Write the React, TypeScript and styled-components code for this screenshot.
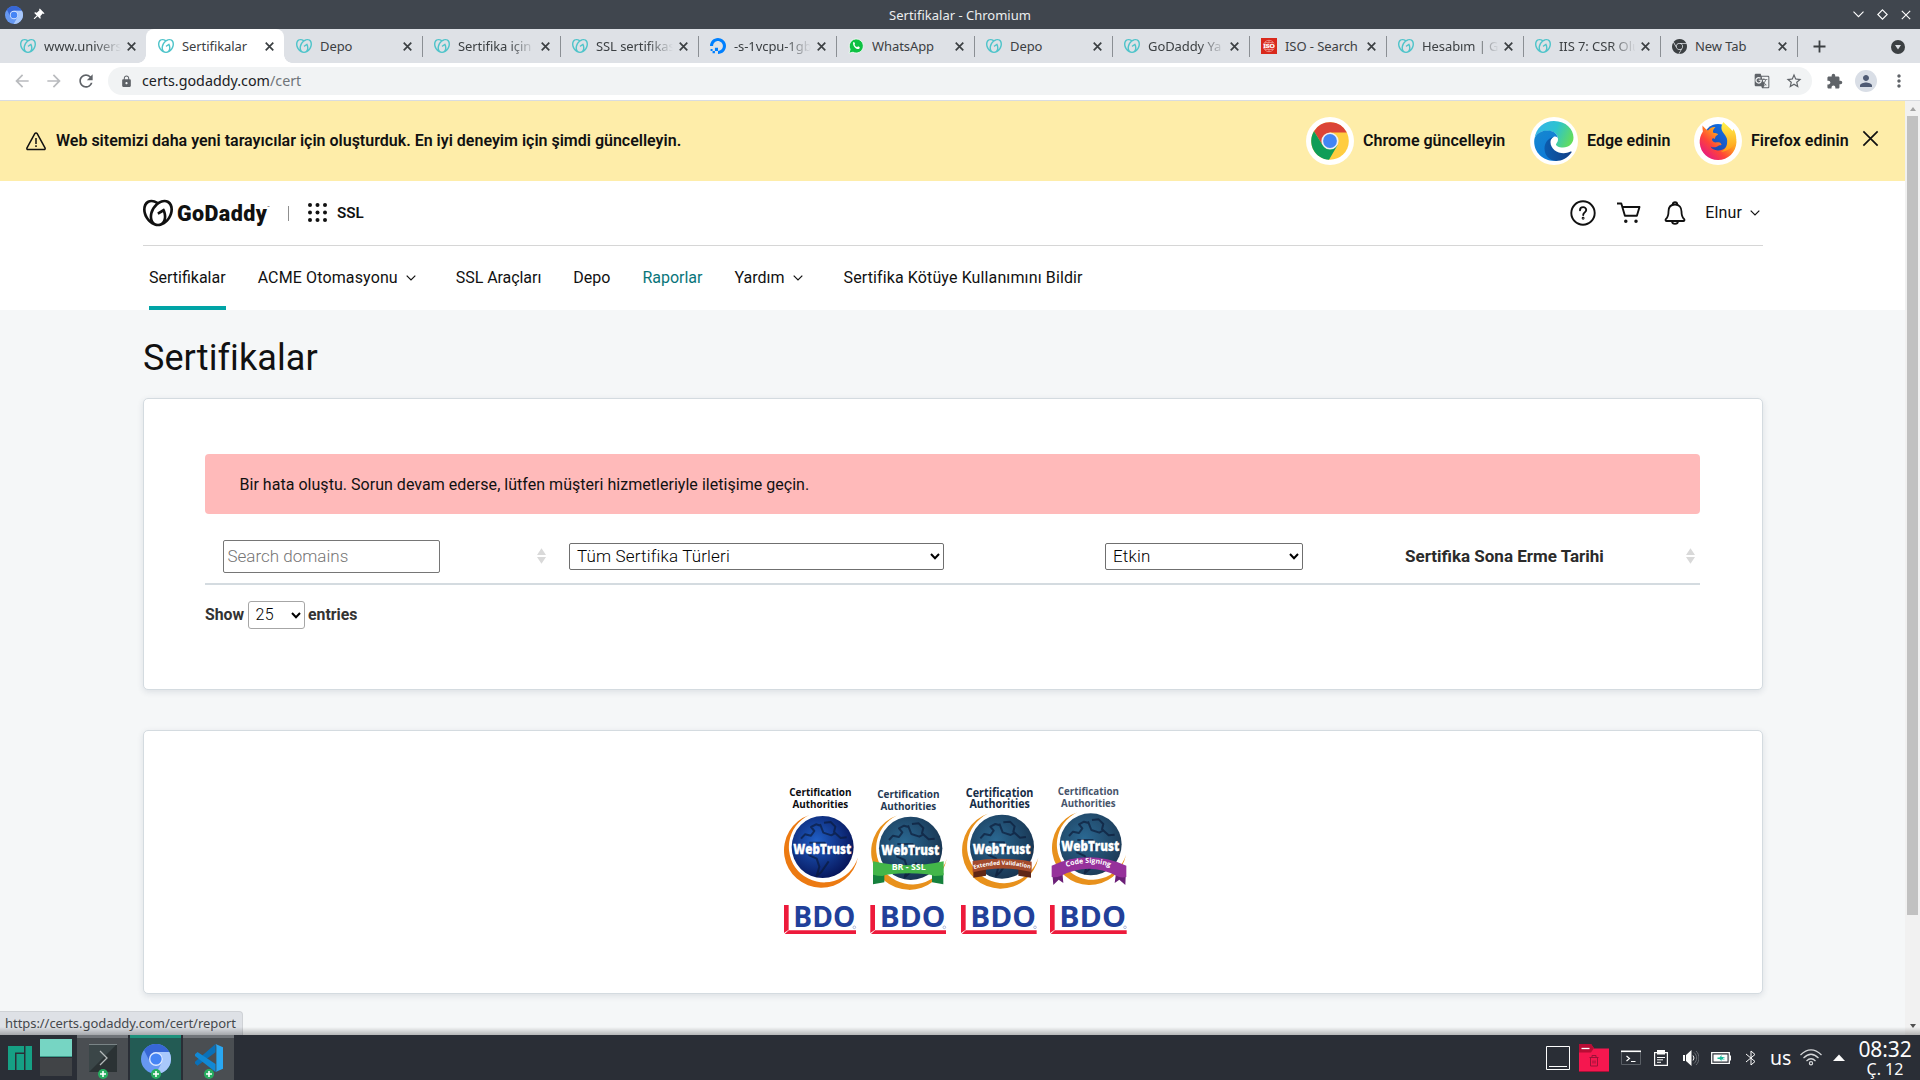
import React from 'react';
import styled, { createGlobalStyle } from 'styled-components';
import { SiGodaddy, SiDigitalocean, SiGooglechrome } from 'react-icons/si';
import { MdArrowBack, MdArrowForward, MdRefresh, MdLock, MdGTranslate, MdStarBorder, MdExtension, MdPerson, MdMoreVert, MdPushPin } from 'react-icons/md';

const ui = '"Noto Sans", sans-serif';
const body = 'Roboto, "Liberation Sans", sans-serif';

const Global = createGlobalStyle`
  *, *::before, *::after { box-sizing: border-box; }
  html, body { margin: 0; height: 100%; overflow: hidden; }
  svg { display: block; flex: none; }
`;

const Desktop = styled.div`
  width: 1920px;
  height: 1080px;
  display: flex;
  flex-direction: column;
  overflow: hidden;
  font-family: ${ui};
  white-space: nowrap;
`;

/* Window chrome */
const TitleBar = styled.header`
  height: 29px;
  flex: none;
  display: grid;
  grid-template-columns: 1fr auto 1fr;
  align-items: center;
  padding: 0 5px;
  background: #40464e;
  color: #eceeef;
  font-size: 13px;
  line-height: 18px;
`;
const TitleSide = styled.div<{ $end?: boolean; $gap: number }>`
  display: flex;
  align-items: center;
  justify-content: ${(p) => (p.$end ? 'flex-end' : 'flex-start')};
  gap: ${(p) => p.$gap}px;
  padding-right: ${(p) => (p.$end ? 4 : 0)}px;
`;
const Pin = styled(MdPushPin)`
  transform: rotate(45deg);
`;

const TabStrip = styled.nav`
  height: 34px;
  flex: none;
  display: flex;
  align-items: center;
  padding-left: 8px;
  background: #dee1e6;
`;
const TabItem = styled.div<{ $active?: boolean; $w: number; $line?: boolean }>`
  position: relative;
  width: ${(p) => p.$w}px;
  height: 34px;
  flex: none;
  display: flex;
  align-items: center;
  padding: 0 10.5px 0 12px;
  border-radius: 8px 8px 0 0;
  background: ${(p) => (p.$active ? '#fff' : 'transparent')};
  &::before {
    content: '';
    display: ${(p) => (p.$line ? 'block' : 'none')};
    position: absolute;
    left: 0;
    top: 7px;
    width: 1px;
    height: 21px;
    background: #8b8f94;
  }
`;
const TabFoot = styled.i<{ $side: 'left' | 'right' }>`
  position: absolute;
  bottom: 0;
  ${(p) => p.$side}: -8px;
  width: 8px;
  height: 8px;
  background: radial-gradient(circle at ${(p) => (p.$side === 'left' ? '0 0' : '100% 0')}, transparent 7.5px, #fff 8px);
`;
const TabLabel = styled.span`
  flex: 1;
  margin: 0 6px 0 8px;
  overflow: hidden;
  font-size: 13px;
  letter-spacing: -0.08px;
  line-height: 20px;
  color: #3c4043;
  mask-image: linear-gradient(90deg, #000 51px, transparent 77px);
`;
const TabFull = styled(TabLabel)`
  mask-image: none;
`;
const StripEnd = styled.div`
  flex: 1;
  height: 21px;
  margin-bottom: -1px;
  display: flex;
  align-items: center;
  justify-content: space-between;
  padding: 0 15px 0 15px;
  border-left: 1px solid #8b8f94;
`;

const Toolbar = styled.div`
  height: 38px;
  flex: none;
  display: flex;
  align-items: center;
  padding: 0 12px 1px;
  border-bottom: 1px solid #d9dce1;
  color: #5f6368;
`;
const NavButtons = styled.div`
  width: 96px;
  flex: none;
  display: flex;
  gap: 12px;
`;
const Omnibox = styled.div`
  width: 1704px;
  height: 28px;
  flex: none;
  display: flex;
  align-items: center;
  padding: 0 9px 0 12px;
  border-radius: 14px;
  background: #f1f3f4;
`;
const Url = styled.div`
  flex: 1;
  margin: -1px 0 0 9px;
  font-size: 14.3px;
  line-height: 20px;
  color: #202124;
  span { color: #70757a; }
`;
const OmniActions = styled.div`
  display: flex;
  align-items: center;
  gap: 15px;
`;
const ToolActions = styled.div`
  display: flex;
  align-items: center;
  margin-left: 14px;
`;
const Avatar = styled.div`
  width: 22px;
  height: 22px;
  margin: 0 12px 0 12px;
  display: flex;
  align-items: center;
  justify-content: center;
  border-radius: 50%;
  background: #d9dee6;
  color: #4f5b74;
`;

/* Page viewport */
const Viewport = styled.div`
  position: relative;
  height: 934px;
  flex: none;
  display: flex;
  background: #f5f7f8;
  font-family: ${body};
  color: #111;
`;
const Page = styled.main`
  width: 1905px;
  height: 934px;
  overflow: hidden;
`;
const ScrollTrack = styled.div`
  width: 15px;
  display: flex;
  flex-direction: column;
  align-items: center;
  background: #f1f1f1;
`;
const ScrollArrow = styled.div<{ $down?: boolean }>`
  width: 0;
  height: 0;
  margin-top: ${(p) => (p.$down ? 109 : 6)}px;
  border: solid transparent;
  border-width: ${(p) => (p.$down ? '4px 3.5px 0' : '0 3.5px 4px')};
  border-${(p) => (p.$down ? 'top' : 'bottom')}-color: ${(p) => (p.$down ? '#505050' : '#a3a3a3')};
`;
const ScrollThumb = styled.div`
  width: 11px;
  height: 799px;
  margin-top: 5px;
  background: #c1c1c1;
`;

const Banner = styled.section`
  height: 80px;
  display: flex;
  align-items: center;
  padding: 0 26px 0 26px;
  background: #feeda9;
  font-size: 16px;
  font-weight: 600;
  line-height: 24px;
`;
const BannerText = styled.p`
  flex: 1;
  margin: 0 0 0 10px;
`;
const BrowserLink = styled.div<{ $w: number }>`
  width: ${(p) => p.$w}px;
  display: flex;
  align-items: center;
  gap: 9px;
  span { margin-top: -1px; }
`;
const Disc = styled.div`
  width: 48px;
  height: 48px;
  flex: none;
  display: flex;
  align-items: center;
  justify-content: center;
  border-radius: 50%;
  background: #fff;
`;
const CloseBox = styled.div`
  margin-top: -6px;
`;

const SiteHeader = styled.header`
  height: 129px;
  padding: 0 142px 0 143px;
  background: #fff;
`;
const HeaderTop = styled.div`
  height: 65px;
  display: flex;
  align-items: center;
  border-bottom: 1px solid #d6d6d6;
`;
const Wordmark = styled.span`
  width: 94px;
  margin: 2px 0 0 4px;
  display: flex;
  font-size: 21.5px;
  font-weight: 900;
  letter-spacing: 0.4px;
  line-height: 26px;
  sup {
    font-size: 4px;
    font-weight: 400;
    line-height: 14px;
    letter-spacing: 0;
  }
`;
const Rule = styled.i`
  width: 1px;
  height: 15px;
  margin: 0 19px 0 17px;
  background: #8f8f8f;
`;
const Dots = styled.svg`
  margin-bottom: 2px;
`;
const Product = styled.span`
  flex: 1;
  margin-left: 10px;
  font-size: 15.2px;
  font-weight: 600;
  line-height: 24px;
`;
const HeaderTools = styled.div`
  display: flex;
  align-items: center;
  gap: 20px;
  padding-right: 3px;
`;
const User = styled.span`
  display: flex;
  align-items: center;
  gap: 8px;
  margin-left: -1px;
  font-size: 16px;
  letter-spacing: 0.15px;
  line-height: 24px;
`;
const SiteNav = styled.nav`
  height: 64px;
  display: flex;
  padding-left: 6px;
`;
const NavItem = styled.a<{ $active?: boolean; $hover?: boolean; $after: number; $track?: number }>`
  height: 64px;
  margin-right: ${(p) => p.$after}px;
  display: flex;
  align-items: center;
  gap: 8px;
  padding-top: 4px;
  border-bottom: 4px solid ${(p) => (p.$active ? '#00a4a6' : 'transparent')};
  font-size: 16px;
  letter-spacing: ${(p) => p.$track ?? 0}px;
  line-height: 24px;
  color: ${(p) => (p.$hover ? '#09757a' : '#111')};
`;

const Content = styled.div`
  padding: 0 142px 0 143px;
`;
const Heading = styled.h1`
  height: 88px;
  margin: 0;
  padding-top: 25px;
  font-size: 36px;
  font-weight: 400;
  letter-spacing: 0.08px;
  line-height: 46px;
`;
const Card = styled.section<{ $h: number }>`
  height: ${(p) => p.$h}px;
  margin-bottom: 40px;
  border: 1px solid #d4dbe0;
  border-radius: 5px;
  background: #fff;
  box-shadow: 0 2px 6px rgba(40, 60, 80, 0.12);
`;
const CertCard = styled(Card)`
  padding: 55px 62px 0 61px;
`;
const SealCard = styled(Card)`
  padding: 43px 0 0 636px;
  display: flex;
`;
const Alert = styled.div`
  height: 60px;
  display: flex;
  align-items: center;
  padding: 1px 0 0 34.5px;
  border-radius: 4px;
  background: #ffbaba;
  font-size: 16px;
  letter-spacing: 0.03px;
  line-height: 24px;
`;
const TableHead = styled.div`
  height: 71px;
  display: grid;
  grid-template-columns: 346px 540px 301px 1fr;
  align-items: center;
  border-bottom: 2px solid #d4dbe0;
`;
const Column = styled.div<{ $l: number }>`
  height: 71px;
  display: flex;
  align-items: center;
  justify-content: space-between;
  padding: 13px 5px 0 ${(p) => p.$l}px;
  font-size: 17px;
  font-weight: 700;
  line-height: 24px;
  color: #2b2b2b;
`;
const SearchField = styled.div`
  width: 217px;
  height: 33px;
  padding-left: 3.5px;
  border: 1px solid #767676;
  border-radius: 2px;
  font-size: 17px;
  font-weight: 300;
  line-height: 30px;
  color: #757575;
`;
const Picker = styled.div<{ $w: number; $h: number; $soft?: boolean; $size?: number }>`
  width: ${(p) => p.$w}px;
  height: ${(p) => p.$h}px;
  display: flex;
  align-items: center;
  justify-content: space-between;
  padding: 0 3px 0 7px;
  border: 1px solid ${(p) => (p.$soft ? '#a6a6a6' : '#6f6f6f')};
  border-radius: ${(p) => (p.$soft ? 3 : 2)}px;
  background: #fff;
  font-size: ${(p) => p.$size ?? 17}px;
  font-weight: 300;
  letter-spacing: 0.16px;
  line-height: 24px;
  color: #000;
`;
const LengthRow = styled.div`
  display: flex;
  align-items: center;
  gap: 3.5px;
  margin-top: 16px;
  font-size: 15.8px;
  font-weight: 700;
  line-height: 24px;
  color: #333;
`;

const StatusBubble = styled.div`
  position: absolute;
  left: 0;
  bottom: 0;
  width: 243px;
  height: 24px;
  padding-left: 5px;
  border: 1px solid #cfd2d6;
  border-width: 1px 1px 0 0;
  border-radius: 0 4px 0 0;
  background: #dee1e6;
  font: 13px/23px ${ui};
  letter-spacing: -0.05px;
  color: #45484c;
`;
const PanelShadow = styled.div`
  position: absolute;
  left: 0;
  bottom: 0;
  width: 100%;
  height: 8px;
  background: linear-gradient(rgba(0, 0, 0, 0), rgba(0, 0, 0, 0.26));
`;

/* Panel */
const Panel = styled.footer`
  height: 45px;
  flex: none;
  display: flex;
  justify-content: space-between;
  background: #2a2e36;
  color: #fcfcfc;
`;
const PanelLeft = styled.div`
  display: flex;
  padding-left: 8px;
`;
const Pager = styled.div`
  width: 32px;
  height: 37px;
  margin: 4px 5px 0 8px;
  display: grid;
  grid-template-rows: 18px 18px;
  gap: 1px;
  i:first-child { background: #76d5c3; border-bottom: 1px solid #3d9c8b; }
  i:last-child { background: #414447; }
`;
const Task = styled.div<{ $active?: boolean }>`
  position: relative;
  width: 51px;
  height: 45px;
  margin-right: 2px;
  display: flex;
  justify-content: center;
  padding-top: 6px;
  border-top: 3px solid ${(p) => (p.$active ? '#1e917c' : '#71757a')};
  background: ${(p) => (p.$active ? '#235b54' : '#4a4e52')};
`;
const PlusBadge = styled.div`
  position: absolute;
  left: 21px;
  bottom: 1px;
`;
const Tray = styled.div`
  display: flex;
  align-items: center;
  padding-right: 8px;
`;
const TrayIcon = styled.div<{ $w: number; $after: number }>`
  width: ${(p) => p.$w}px;
  margin-right: ${(p) => p.$after}px;
`;
const Layout = styled.span`
  width: 21px;
  margin: 1px 9px 0 -1px;
  font-size: 19.5px;
  line-height: 24px;
`;
const Clock = styled.div`
  width: 54px;
  display: flex;
  flex-direction: column;
  align-items: center;
  font-size: 16px;
  line-height: 17px;
  b {
    font-size: 21px;
    font-weight: 400;
    letter-spacing: -0.1px;
    line-height: 24px;
  }
`;

/* Small drawings */
const Cross = ({ size = 9, w = 1.7, color = '#3c4043' }: { size?: number; w?: number; color?: string }) => (
  <svg width={size} height={size} viewBox="0 0 10 10" stroke={color} strokeWidth={(w * 10) / size} fill="none"><path d="M.8.8l8.4 8.4M9.2.8L.8 9.2" /></svg>
);
const Chevron = () => (
  <svg width="10" height="6" viewBox="0 0 10 6" fill="none" stroke="#111" strokeWidth="1.2"><path d="M.7.7L5 5 9.3.7" /></svg>
);
const Caret = () => (
  <svg width="10" height="7" viewBox="0 0 10 7" fill="none" stroke="#000" strokeWidth="2"><path d="M1 1l4 4.2L9 1" /></svg>
);
const Sort = () => (
  <svg width="9" height="16" viewBox="0 0 9 16" fill="#d9d9d9"><path d="M0 7h9L4.500.3zM0 9h9l-4.500 6.700z" /></svg>
);
const Chromium = ({ size }: { size: number }) => (
  <svg width={size} height={size} viewBox="0 0 30 30">
    <circle cx="15" cy="15" r="15" fill="#6698f2" />
    <path d="M15 8h13.300A15 15 0 0 0 3 6l6 12a7 7 0 0 1 6-10z" fill="#3767d6" />
    <path d="M28.300 8H15a7 7 0 0 1 6 10.500L14.500 30A15 15 0 0 0 28.300 8z" fill="#a9c8fb" />
    <circle cx="15" cy="15" r="7" fill="#dbe7ff" /><circle cx="15" cy="15" r="5.600" fill="#4584f5" />
  </svg>
);
const IsoMark = () => (
  <svg width="16" height="16" viewBox="0 0 16 16">
    <rect width="16" height="16" fill="#d9291c" />
    <g fill="none" stroke="#f0a39c" strokeWidth=".7"><circle cx="8" cy="8" r="5.700" /><path d="M8 2v12M4 4.500h8M4 11.500h8" /></g>
    <rect x="1" y="5.500" width="14" height="5" fill="#d9291c" />
    <text x="8" y="10.300" textAnchor="middle" fontFamily="Liberation Serif" fontWeight="700" fontSize="6.800" fill="#fff" stroke="#fff" strokeWidth=".3">ISO</text>
  </svg>
);
const WhatsMark = () => (
  <svg width="16" height="16" viewBox="0 0 16 16">
    <path d="M1 15.200l1.100-3.900A7 7 0 1 1 5 14.200z" fill="#0ec143" stroke="#fff" strokeWidth=".8" />
    <path d="M5.300 4.300c.5-.5 1-.3 1.200.2l.5 1.200c.1.400-.5.900-.5 1.100.5 1 1.400 1.900 2.500 2.300.4 0 .8-.9 1.100-.8l1.400.7c.5.300.1 1.500-.5 1.900-2.600 1.200-7-3.300-5.700-6.600z" fill="#fff" />
  </svg>
);
const WarnIcon = () => (
  <svg width="20" height="19" viewBox="0 0 20 19" fill="none" stroke="#111" strokeWidth="1.500" strokeLinejoin="round">
    <path d="M8.800 1.700L1 15.900c-.4.900 0 1.700 1 1.700h16c1 0 1.400-.8 1-1.700L11.200 1.700c-.6-1-1.800-1-2.400 0z" /><path d="M10 6v6M10 13.300v1.700" />
  </svg>
);
const ChromeLogo = () => (
  <svg width="38" height="38" viewBox="0 0 38 38">
    <circle cx="19" cy="19" r="18.800" fill="#ffcd40" />
    <path d="M19 10.500h16.800A18.800 18.800 0 0 0 3 9.200l8.700 14z" fill="#db4437" />
    <path d="M3 9.200A18.800 18.800 0 0 0 18 37.800l8.500-14.500-14.800-.1z" fill="#0f9d58" />
    <circle cx="19" cy="19" r="8.600" fill="#f1f1f1" /><circle cx="19" cy="19" r="6.900" fill="#4285f4" />
  </svg>
);
const EdgeLogo = () => (
  <svg width="40" height="40" viewBox="0 0 40 40">
    <defs>
      <linearGradient id="ea" x1="0" x2="1" y1=".3" y2=".6"><stop offset="0" stopColor="#35b4e9" /><stop offset=".5" stopColor="#2cc3d0" /><stop offset="1" stopColor="#64dd5b" /></linearGradient>
      <linearGradient id="eb" x1="0" x2=".6" y1="0" y2="1"><stop offset="0" stopColor="#1688cf" /><stop offset="1" stopColor="#0d79d8" /></linearGradient>
      <linearGradient id="ec" x1="0" x2="1"><stop offset="0" stopColor="#0b5cae" /><stop offset="1" stopColor="#123f86" /></linearGradient>
    </defs>
    <path d="M.5 17.500C2 7 10 0 20 0c12 0 19.500 8.500 19.500 16.500 0 6-4.500 10-10.500 10-4.500 0-7-1.500-7-3 0-1.200 2-2 2-5.500C24 13 19 9.800 13.500 9.800 7 9.800 2 13 .5 17.500z" fill="url(#ea)" />
    <path d="M.4 18C2 12.500 7.500 9.600 13.500 9.600 20 9.600 24 14 24 18c0-2-2.500-3-4.500-2-3 1.500-5.500 6-5.500 10.500 0 6 4 11.500 10 13C10 42 -1.500 31 .4 18z" fill="url(#eb)" />
    <path d="M19.500 16c-5.500 1-9 6-9 11.500C10.500 34 15 39.500 22 40c6 0 12-3.500 15.500-8.500.5-.8-.3-1.300-1-.9C28 35 16.500 30 16.500 21c0-2 1-4 3-5z" fill="url(#ec)" />
  </svg>
);
const FirefoxLogo = () => (
  <svg width="38" height="38" viewBox="0 0 38 38">
    <defs>
      <linearGradient id="fa" x1=".9" x2=".1" y1=".1" y2=".9"><stop offset="0" stopColor="#ffd53a" /><stop offset=".35" stopColor="#ff9a1f" /><stop offset=".65" stopColor="#ff4438" /><stop offset="1" stopColor="#e3168b" /></linearGradient>
      <linearGradient id="fb" x1="0" x2="1" y1="1" y2="0"><stop offset="0" stopColor="#243a9c" /><stop offset="1" stopColor="#0a7cf5" /></linearGradient>
      <linearGradient id="fc" x1="0" x2="0" y1="0" y2="1"><stop offset="0" stopColor="#fff44f" /><stop offset="1" stopColor="#ff9a16" /></linearGradient>
    </defs>
    <circle cx="19" cy="16" r="14" fill="url(#fb)" />
    <path d="M3.500 3.500c-.2 2 .1 4 .4 6C1.500 13 .5 17 .7 21 1.500 31 9.500 38 19 38c10 0 18-7.500 18.500-18C37 13 34 9 31 7c-2 4-1 9-2.500 12 1 6-3.500 9.500-9.500 9.500-4-.3-6-1.500-7.500-4 3 1.500 6 .8 7.500-.6 2-1.300 3.500-.5 3.500-1.500-1-2.500-4-2-6-2-2.500-.2-3.500-2-3.500-3.500 1-1 2-.5 3 0 .3-1.500 0-2.500 3-4.300 0-1.800-3.500-1.500-5-2.200C13.500 8.500 15 6.500 16.500 5c-4-.3-6 1.500-7.500 3.500C7.500 8 5 5.500 3.500 3.500z" fill="url(#fa)" />
    <path d="M24.500 0c-3 4-2.500 8 0 11 3 3.500 4.500 7 3.500 11-.5 3.500-3 6.500-6 8 8-1 13.300-6 15.300-12 0-5-1-8-2.800-11l-1.500 2.500C32.500 6.500 28 4 24.500 0z" fill="url(#fc)" />
  </svg>
);

type SealProps = { x: number; w: number; cx: number; cy: number; r: number; ty: number; ink: string; fs: number; tone: [string, string]; ring: string; bx: number; by: number; bw: number; kind: 'plain' | 'br' | 'ev' | 'cs'; id: string };
const Seal = ({ x, w, cx, cy, r, ty, ink, fs, tone, ring, bx, by, bw, kind, id }: SealProps) => {
  const k = r / 93;
  const from = `${cx - 40 * k} ${cy - 99 * k}`;
  const to = `${cx + 106 * k} ${cy + 28 * k}`;
  return (
    <svg width={w / 3} height="170" viewBox={`${x} 15 ${w} 510`} fontFamily="Open Sans, Noto Sans, sans-serif" fontWeight="700" textAnchor="middle">
      <defs>
        <radialGradient id={id} cx=".4" cy=".4" r=".65"><stop offset="0" stopColor={tone[0]} /><stop offset="1" stopColor={tone[1]} /></radialGradient>
        <path id={`${id}p`} d={kind === 'ev' ? 'M608 302Q692 274 785 300' : 'M875 300Q955 264 1035 300'} />
      </defs>
      <g fill={ink} fontSize={fs * 1.12}>
        <text x={cx - 7} y={ty} textLength={fs * 6.55} lengthAdjust="spacingAndGlyphs">Certification</text>
        <text x={cx - 7} y={ty + 35} textLength={fs * 5.85} lengthAdjust="spacingAndGlyphs">Authorities</text>
      </g>
      <path d={`M${from}A${112 * k} ${112 * k} 0 1 0 ${to}A${106 * k} ${106 * k} 0 1 1 ${from}z`} fill={ring} />
      <circle cx={cx} cy={cy - 3} r={r} fill={`url(#${id})`} />
      <g fill="none" stroke="#0a1836" strokeOpacity=".65" strokeWidth="6" strokeLinejoin="round" transform={`translate(${cx} ${cy})`}>
        <path d="M-65-28l12-13 18 4 10-14-10-12 15-8 14 4M-8-72l10 26 24 8 14-8M4-76l20-2 14 14-4 16 20 18 18-2M-40-16h46l5 30M-45 0l5 22 22 10 8 24-8 28 14-12 22-32" />
      </g>
      <text x={cx - 1} y={cy + 18} fontSize="42" fontWeight="800" fill="#fff" stroke="#fff" strokeWidth="1" textLength="174" lengthAdjust="spacingAndGlyphs">WebTrust</text>
      {kind === 'br' && <g>
        <path d="M309 312v34l34-6v-28zM520 312v34l-34-6v-28z" fill="#15803c" />
        <path d="M309 277q106 24 212 0v42q-15 2-28 2-20-8-78-8t-78 8q-14 0-28-4z" fill="#43b649" />
        <text x="416" y="302" fontSize="24" fill="#fff" textLength="102" lengthAdjust="spacingAndGlyphs">BR - SSL</text></g>}
      {kind === 'ev' && <g>
        <path d="M610 294v32l38-6v-22zM783 294v32l-38-6v-22z" fill="#5f2717" />
        <path d="M608 276q84-14 177 2v31q-92-22-177 1z" fill="#a34a2c" />
        <text fontSize="17" fill="#fff"><textPath href={`#${id}p`} startOffset="50%">Extended Validation</textPath></text></g>}
      {kind === 'cs' && <g>
        <path d="M846 300l4 48 16-16 14 10-4-44zM1068 300l-2 48-18-16-14 10 6-44z" fill="#6b1f77" />
        <path d="M845 290q110-50 224 0v34q-18 4-30-4-82-42-166 0-14 6-28 4z" fill="#96319b" />
        <text fontSize="21" fill="#fff"><textPath href={`#${id}p`} startOffset="50%">Code Signing</textPath></text></g>}
      <path d={`M${bx} ${by}h14v74l-14 10z`} fill="#ed1a3b" />
      <path d={`M${bx + 2} ${by + 87}l12-11h${bw - 14}v11z`} fill="#ed1a3b" />
      <text x={bx + 28} y={by + 65} textAnchor="start" fontSize="88" fontWeight="700" fill="#21409a" textLength={bw - 30} lengthAdjust="spacingAndGlyphs">BDO</text>
      <circle cx={bx + bw - 5} cy={by + 67} r="4" fill="none" stroke="#8ea0cf" strokeWidth="2" />
    </svg>
  );
};

const Plus = () => (
  <PlusBadge><svg width="10" height="10" viewBox="0 0 10 10"><circle cx="5" cy="5" r="5" fill="#27ae60" /><path d="M5 2v6M2 5h6" stroke="#fff" strokeWidth="1.600" /></svg></PlusBadge>
);

const gd = <SiGodaddy size={16} color="#4fc4ca" />;
const tabs: { icon: React.ReactNode; label: string; fade?: boolean; active?: boolean }[] = [
  { icon: gd, label: 'www.univers', fade: true },
  { icon: gd, label: 'Sertifikalar', active: true },
  { icon: gd, label: 'Depo' },
  { icon: gd, label: 'Sertifika için', fade: true },
  { icon: gd, label: 'SSL sertifikas', fade: true },
  { icon: <SiDigitalocean size={16} color="#0080ff" />, label: '-s-1vcpu-1gb', fade: true },
  { icon: <WhatsMark />, label: 'WhatsApp' },
  { icon: gd, label: 'Depo' },
  { icon: gd, label: 'GoDaddy Ya', fade: true },
  { icon: <IsoMark />, label: 'ISO - Search' },
  { icon: gd, label: 'Hesabım | G', fade: true },
  { icon: gd, label: 'IIS 7: CSR Olu', fade: true },
  { icon: <SiGooglechrome size={15} color="#3c4043" />, label: 'New Tab' },
];

export default function App() {
  return (
    <Desktop>
      <Global />
      <TitleBar>
        <TitleSide $gap={8}>
          <Chromium size={18} />
          <Pin size={14} color="#fff" />
        </TitleSide>
        <span>Sertifikalar - Chromium</span>
        <TitleSide $end $gap={13}>
          <svg width="11" height="7" viewBox="0 0 11 7" fill="none" stroke="#fff" strokeWidth="1.100"><path d="M.5.700l5 5 5-5" /></svg>
          <svg width="11" height="11" viewBox="0 0 11 11" fill="none" stroke="#fff" strokeWidth="1.100"><path d="M5.500.800l4.700 4.700-4.700 4.700L.8 5.500z" /></svg>
          <Cross size={10} w={1.1} color="#fff" />
        </TitleSide>
      </TitleBar>
      <TabStrip>
        {tabs.map((t, i) => {
          const Label = t.fade ? TabLabel : TabFull;
          return (
            <TabItem key={i} $w={i < 8 ? 138 : 137} $active={t.active} $line={i > 2}>
              {t.active && <><TabFoot $side="left" /><TabFoot $side="right" /></>}
              {t.icon}
              <Label>{t.label}</Label>
              <Cross />
            </TabItem>
          );
        })}
        <StripEnd>
          <svg width="13" height="13" viewBox="0 0 13 13" stroke="#3c4043" strokeWidth="1.800"><path d="M6.500.5v12M.5 6.500h12" /></svg>
          <svg width="14" height="14" viewBox="0 0 14 14"><circle cx="7" cy="7" r="7" fill="#3c4043" /><path d="M4 5h6L7 9.500z" fill="#dee1e6" /></svg>
        </StripEnd>
      </TabStrip>
      <Toolbar>
        <NavButtons>
          <MdArrowBack size={20} color="#b9bbbe" />
          <MdArrowForward size={20} color="#b9bbbe" />
          <MdRefresh size={20} />
        </NavButtons>
        <Omnibox>
          <MdLock size={13} />
          <Url>certs.godaddy.com<span>/cert</span></Url>
          <OmniActions><MdGTranslate size={16} /><MdStarBorder size={18} /></OmniActions>
        </Omnibox>
        <ToolActions>
          <MdExtension size={17} />
          <Avatar><MdPerson size={18} /></Avatar>
          <MdMoreVert size={20} />
        </ToolActions>
      </Toolbar>

      <Viewport>
        <Page>
          <Banner>
            <WarnIcon />
            <BannerText>Web sitemizi daha yeni tarayıcılar için oluşturduk. En iyi deneyim için şimdi güncelleyin.</BannerText>
            <BrowserLink $w={224}><Disc><ChromeLogo /></Disc><span>Chrome güncelleyin</span></BrowserLink>
            <BrowserLink $w={164}><Disc><EdgeLogo /></Disc><span>Edge edinin</span></BrowserLink>
            <BrowserLink $w={168}><Disc><FirefoxLogo /></Disc><span>Firefox edinin</span></BrowserLink>
            <CloseBox><Cross size={17} w={1.7} color="#111" /></CloseBox>
          </Banner>
          <SiteHeader>
            <HeaderTop>
              <SiGodaddy size={30} color="#111" />
              <Wordmark>GoDaddy<sup>™</sup></Wordmark>
              <Rule />
              <Dots width="19" height="19" viewBox="0 0 19 19" fill="#111">
                {[2, 9.5, 17].map((y) => [2, 9.5, 17].map((x) => <circle key={`${x}-${y}`} cx={x} cy={y} r="2" />))}
              </Dots>
              <Product>SSL</Product>
              <HeaderTools>
                <svg width="26" height="26" viewBox="0 0 26 26" fill="none" stroke="#111" strokeWidth="1.900">
                  <circle cx="13" cy="13" r="11.700" /><path d="M10 10.200c0-4 6.200-4 6.200-.2 0 2.400-3 2.400-3 5" strokeLinecap="round" /><circle cx="13.100" cy="18.300" r=".5" />
                </svg>
                <svg width="26" height="22" viewBox="0 0 26 22" fill="none" stroke="#111" strokeWidth="1.900" strokeLinejoin="round">
                  <path d="M1 1.500h4.300l3.600 12.300h12L23.500 5H6.500" /><circle cx="9.800" cy="19.300" r=".8" /><circle cx="20" cy="19.300" r=".8" />
                </svg>
                <svg width="24" height="24" viewBox="-2 0 24 24" fill="none" stroke="#111" strokeWidth="1.800" strokeLinejoin="round">
                  <path d="M11 3.500c-4.300 0-6.500 3-6.500 7 0 4.500-.9 6-2.600 7.500-.8.900-.3 2 .8 2h16.600c1.100 0 1.600-1.100.8-2-1.700-1.500-2.600-3-2.600-7.500 0-4-2.200-7-6.500-7zM8.700 3.600c0-3.300 4.600-3.300 4.600 0M8 20.300c.3 3.300 5.700 3.300 6 0" />
                </svg>
                <User>Elnur<Chevron /></User>
              </HeaderTools>
            </HeaderTop>
            <SiteNav>
              <NavItem $active $after={32}>Sertifikalar</NavItem>
              <NavItem $after={40} $track={0.13}>ACME Otomasyonu<Chevron /></NavItem>
              <NavItem $after={32} $track={-0.06}>SSL Araçları</NavItem>
              <NavItem $after={32}>Depo</NavItem>
              <NavItem $hover $after={32}>Raporlar</NavItem>
              <NavItem $after={41}>Yardım<Chevron /></NavItem>
              <NavItem $after={0} $track={0.12}>Sertifika Kötüye Kullanımını Bildir</NavItem>
            </SiteNav>
          </SiteHeader>
          <Content>
            <Heading>Sertifikalar</Heading>
            <CertCard $h={292}>
              <Alert>Bir hata oluştu. Sorun devam ederse, lütfen müşteri hizmetleriyle iletişime geçin.</Alert>
              <TableHead>
                <Column $l={18}><SearchField>Search domains</SearchField><Sort /></Column>
                <Column $l={18}><Picker $w={375} $h={27}>Tüm Sertifika Türleri<Caret /></Picker></Column>
                <Column $l={14}><Picker $w={198} $h={27}>Etkin<Caret /></Picker></Column>
                <Column $l={13}>Sertifika Sona Erme Tarihi<Sort /></Column>
              </TableHead>
              <LengthRow>Show<Picker $w={57} $h={28} $soft $size={16}>25<Caret /></Picker>entries</LengthRow>
            </CertCard>
            <SealCard $h={264}>
              <Seal id="s1" kind="plain" x={30} w={255} cx={158} cy={237} r={93} ty={81} ink="#0c0c10" fs={28.5} tone={['#2060c8', '#061458']} ring="#ec7a12" bx={42} by={408} bw={216} />
              <Seal id="s2" kind="br" x={285} w={270} cx={422} cy={241} r={95} ty={88} ink="#253852" fs={28.5} tone={['#2a6892', '#18334f']} ring="#e8911c" bx={301} by={408} bw={227} />
              <Seal id="s3" kind="ev" x={555} w={270} cx={696} cy={236} r={96} ty={83} ink="#162c46" fs={31} tone={['#2a6892', '#18334f']} ring="#e8911c" bx={573} by={408} bw={227} />
              <Seal id="s4" kind="cs" x={825} w={270} cx={962} cy={229} r={93} ty={79} ink="#46546a" fs={28} tone={['#2a6892', '#1d3a56']} ring="#e8911c" bx={840} by={408} bw={230} />
            </SealCard>
          </Content>
        </Page>
        <ScrollTrack><ScrollArrow /><ScrollThumb /><ScrollArrow $down /></ScrollTrack>
        <StatusBubble>https://certs.godaddy.com/cert/report</StatusBubble>
        <PanelShadow />
      </Viewport>

      <Panel>
        <PanelLeft>
          <svg width="24" height="45" viewBox="0 0 24 45" fill="#16a085"><path d="M0 11h16v6.500H7V35H0zM8.500 19H16v16H8.500zM17.500 11H24v24h-6.500z" /></svg>
          <Pager><i /><i /></Pager>
          <Task>
            <svg width="28" height="28" viewBox="0 0 28 28"><rect width="28" height="28" fill="#3b4648" /><path d="M0 28L28 0v28z" fill="#2b3234" /><path d="M0 0h28v1H0z" fill="#7a8486" /><path d="M11 7l7 7-7 7" fill="none" stroke="#b5babb" strokeWidth="1.300" /></svg><Plus />
          </Task>
          <Task $active><Chromium size={30} /><Plus /></Task>
          <Task>
            <svg width="28" height="28" viewBox="0 0 28 28"><path d="M20.500 0v8.300L2.500 21.800 0 19.500v-1.800L20.500 0z" fill="#0a70b8" /><path d="M0 10.300L2.500 8l18 12v8L0 11.900z" fill="#1188d4" /><path d="M20.500 0L28 3.200v21.600L20.500 28c1.200-1 .9-2.500.9-3.500V3.500c0-1 .1-2.500-.9-3.500z" fill="#29a7f2" /></svg><Plus />
          </Task>
        </PanelLeft>
        <Tray>
          <TrayIcon $w={24} $after={9}><svg width="24" height="24" viewBox="0 0 24 24" fill="none" stroke="#fcfcfc"><path d="M.5.500h23v23H.5zM3 20.500h18" /></svg></TrayIcon>
          <TrayIcon $w={30} $after={12}><svg width="30" height="28" viewBox="0 0 30 28"><path d="M0 0h12l3 4.500h15V28H0z" fill="#f5174f" /><path d="M0 0h12l3 4-3 4.500H0z" fill="#b80d35" /><path d="M2.500 4.500h8" stroke="#fff" strokeWidth="1.300" /><path d="M10.500 13.500h9M13 13v-1.500h4V13M11.500 14v8h7v-8M14 16.500v3M16 16.500v3" fill="none" stroke="#9c1238" /><path d="M0 27.500h30" stroke="#a81038" /></svg></TrayIcon>
          <TrayIcon $w={20} $after={13}><svg width="20" height="16" viewBox="0 0 20 16" fill="none"><path d="M.5 1.500h19v13H.5z" stroke="#5a5f66" /><path d="M0 1.300h20" stroke="#fff" strokeWidth="1.600" /><path d="M5.500 6l3 2.500-3 2.500M10 11.500h4.500" stroke="#fff" strokeWidth="1.200" /></svg></TrayIcon>
          <TrayIcon $w={14} $after={15}><svg width="14" height="16" viewBox="0 0 14 16" fill="none" stroke="#fcfcfc"><path d="M.6 2.600h12.800v12.800H.6z" strokeWidth="1.200" /><path d="M3 0h8v4.500H3z" fill="#fcfcfc" stroke="none" /><path d="M3 7.500h8M3 9.800h6M3 12.300h4" /></svg></TrayIcon>
          <TrayIcon $w={16} $after={12}><svg width="16" height="16" viewBox="0 0 16 16"><path d="M0 5h2v6H0zM3 5l5.500-5v16L3 11z" fill="#fcfcfc" /><path d="M10 5.500q2 2.500 0 5" stroke="#fcfcfc" fill="none" /><path d="M11 2.500c3.500 3 3.500 8 0 11M13 1c4 4 4 10 0 14" stroke="#6c7076" fill="none" /></svg></TrayIcon>
          <TrayIcon $w={20} $after={14}><svg width="20" height="12" viewBox="0 0 20 12"><path d="M.7.700h17.600v10.600H.7z" fill="none" stroke="#fcfcfc" strokeWidth="1.300" /><path d="M19 3.500h1v5h-1zM2.500 2.500h14v7h-14z" fill="#fcfcfc" /><path d="M6.500 5.500h2l2-2.500v2h3v.8h-1.500v1h1.500v.7h-3v1.500l-2-2h-2z" fill="#1abc9c" /></svg></TrayIcon>
          <TrayIcon $w={12} $after={14}><svg width="12" height="16" viewBox="0 0 12 16" fill="none" stroke="#fcfcfc"><path d="M1 4l9 7.500L6 15V1l4 3.500L1 12" /></svg></TrayIcon>
          <Layout>us</Layout>
          <TrayIcon $w={22} $after={11}><svg width="22" height="17" viewBox="0 0 22 17" fill="none" stroke="#d5d7d9" strokeWidth="1.200"><path d="M.5 6Q11-4.500 21.500 6M3.500 9Q11 1.500 18.500 9M6.500 12Q11 7.500 15.500 12" /><circle cx="11" cy="14.300" r="1.600" /></svg></TrayIcon>
          <TrayIcon $w={12} $after={13}><svg width="12" height="7" viewBox="0 0 12 7" fill="#fcfcfc"><path d="M0 7L6 .5 12 7z" /></svg></TrayIcon>
          <Clock><b>08:32</b>Ç. 12</Clock>
        </Tray>
      </Panel>
    </Desktop>
  );
}
